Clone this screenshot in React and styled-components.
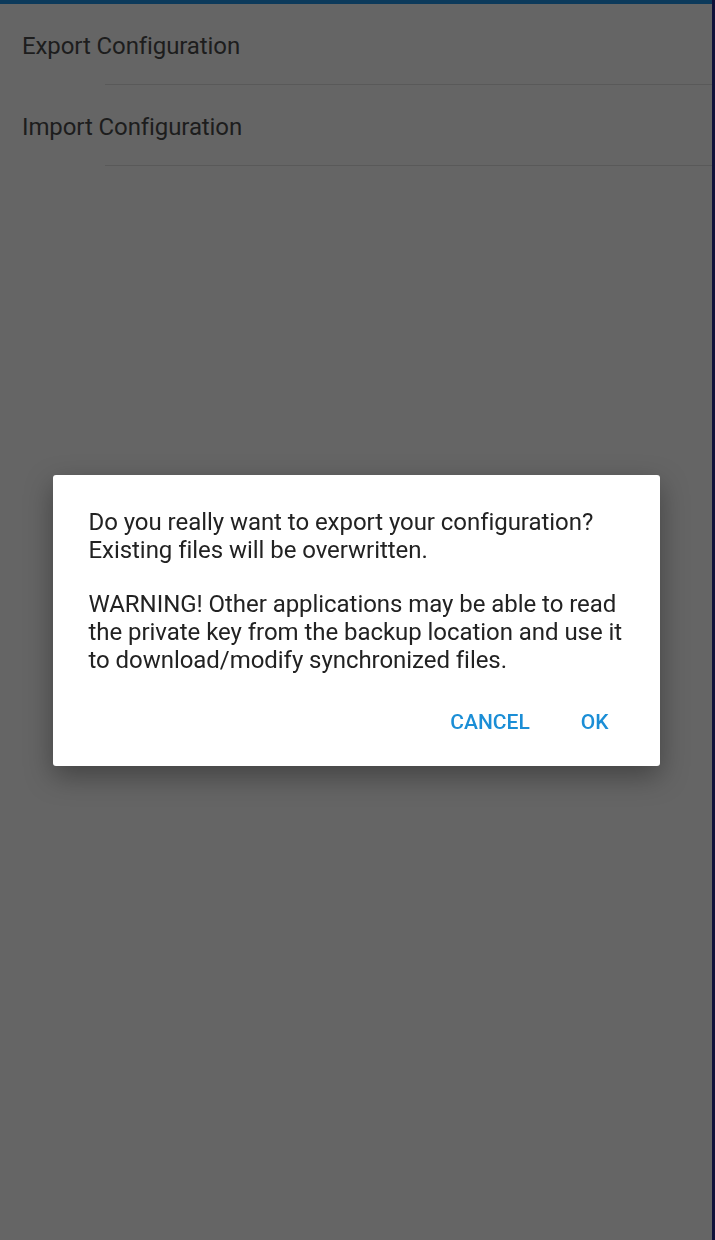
import styled, { createGlobalStyle } from 'styled-components'

const GlobalStyle = createGlobalStyle`
   html, body {
      margin: 0;
      padding: 0;
      background-color: #656565;
      font-family: Roboto, 'Noto Sans', sans-serif;
   }
`

const Screen = styled.div`
   display: flex;
   width: 715px;
   height: 1240px;
   background-color: #656565;
   overflow: hidden;
`

const Main = styled.div`
   flex: 1;
   display: flex;
   flex-direction: column;
`

const EdgeStrip = styled.div`
   width: 3px;
   background-color: #10113a;
`

const TopBar = styled.div`
   height: 4px;
   background-color: #0c3a5b;
`

const List = styled.div`
   display: flex;
   flex-direction: column;
`

const Item = styled.div`
   position: relative;
   height: 81px;
   display: flex;
   align-items: center;
   padding-left: 22px;
   padding-top: 4px;
   box-sizing: border-box;
   font-size: 24px;
   color: #1d1d1d;
   letter-spacing: -0.1px;
   border-bottom: 1px solid transparent;

   &::after {
      content: '';
      position: absolute;
      left: 105px;
      right: 0;
      bottom: -1px;
      height: 1px;
      background-color: #595959;
   }
`

const Scrim = styled.div`
   position: fixed;
   top: 0;
   left: 0;
   right: 3px;
   bottom: 0;
   display: flex;
   align-items: center;
   justify-content: center;
`

const Dialog = styled.div`
   width: 607px;
   box-sizing: border-box;
   background-color: #fff;
   border-radius: 3px;
   padding: 33px 36px 0 36px;
   box-shadow: 0 10px 28px rgba(0, 0, 0, 0.35);
`

const Message = styled.p`
   margin: 0 0 ${(props) => props.gap || 0}px 0;
   font-size: 24px;
   line-height: 28px;
   color: #222;
   letter-spacing: -0.05px;
`

const Actions = styled.div`
   display: flex;
   justify-content: flex-end;
   gap: 23px;
   padding: 28px 0 24px 0;
   margin-right: 1px;
`

const ActionButton = styled.button`
   border: none;
   background: none;
   height: 40px;
   padding: 0 14px;
   font-family: Roboto, sans-serif;
   font-size: 21px;
   font-weight: 500;
   color: #1b8ed6;
   text-transform: uppercase;
   cursor: pointer;
`

export default function App() {
   return (
      <>
         <GlobalStyle />
         <Screen>
            <Main>
               <TopBar />
               <List>
                  <Item>Export Configuration</Item>
                  <Item>Import Configuration</Item>
               </List>
            </Main>
            <EdgeStrip />
            <Scrim>
               <Dialog>
                  <Message gap={26}>
                     Do you really want to export your configuration?
                     <br />
                     Existing files will be overwritten.
                  </Message>
                  <Message>
                     WARNING! Other applications may be able to read the private key from the
                     backup location and use it to download/modify synchronized files.
                  </Message>
                  <Actions>
                     <ActionButton>Cancel</ActionButton>
                     <ActionButton>OK</ActionButton>
                  </Actions>
               </Dialog>
            </Scrim>
         </Screen>
      </>
   )
}
